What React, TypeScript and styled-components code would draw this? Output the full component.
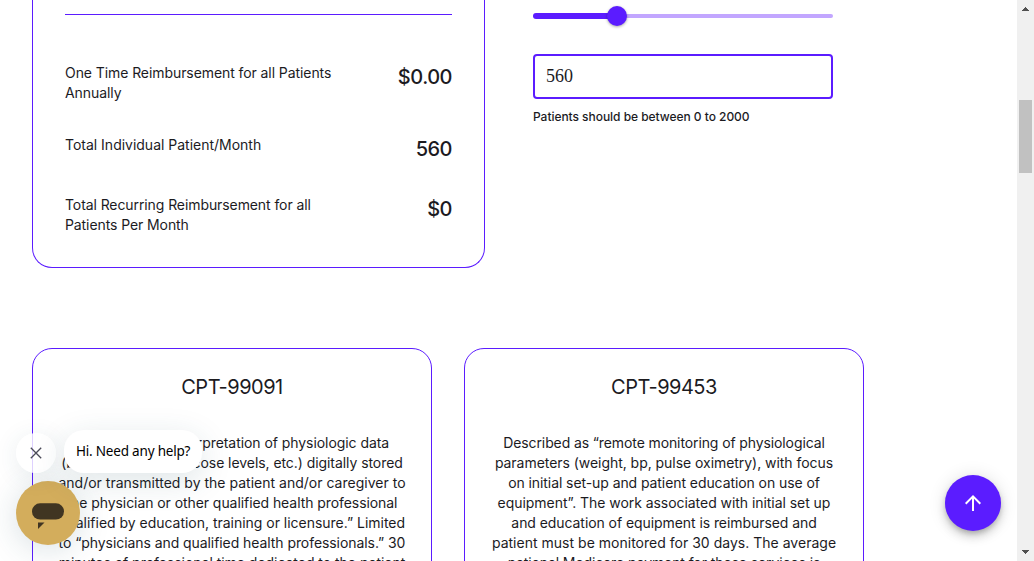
import React from "react";
import styled, { createGlobalStyle } from "styled-components";

const violet = "#5b1cff";

const GlobalStyle = createGlobalStyle`
  * { box-sizing: border-box; }
  body { margin: 0; background: #fff; overflow: hidden; }
`;

const Window = styled.div`
  position: relative;
  display: flex;
  width: 1034px;
  height: 561px;
  overflow: hidden;
  background: #fff;
  color: #1c1b1f;
  font-family: Inter, "Liberation Sans", sans-serif;
  font-size: 14px;
  line-height: 20px;
`;

const Page = styled.main`
  flex: 1;
  min-width: 0;
  height: 561px;
  overflow: hidden;
  padding: 0 32px;
`;

const Calculator = styled.section`
  display: flex;
  align-items: flex-start;
  gap: 48px;
  height: 268px;
`;

const Summary = styled.div`
  width: 453px;
  height: 268px;
  padding: 14px 32px 32px;
  border: 1px solid ${violet};
  border-top: 0;
  border-radius: 0 0 20px 20px;
`;

const Divider = styled.hr`
  height: 1px;
  margin: 0 0 48px;
  border: 0;
  background: ${violet};
`;

const Totals = styled.div`
  display: flex;
  flex-direction: column;
  gap: 32px;
`;

const TotalRow = styled.div`
  display: flex;
  justify-content: space-between;
  align-items: flex-start;
`;

const TotalLabel = styled.div<{ $tracking: number }>`
  width: 275px;
  letter-spacing: ${(p) => p.$tracking}px;
`;

const Amount = styled.div`
  height: 28px;
  font-size: 20px;
  font-weight: 500;
  line-height: 28px;
  letter-spacing: -0.5px;
`;

const Controls = styled.div`
  display: flex;
  flex-direction: column;
  width: 300px;
  padding-top: 6px;
`;

const Slider = styled.div`
  display: flex;
  align-items: center;
  height: 20px;
  margin-bottom: 28px;
`;

const Filled = styled.div`
  width: 84px;
  height: 6px;
  border-radius: 3px 0 0 3px;
  background: ${violet};
`;

const Thumb = styled.div`
  width: 20px;
  height: 20px;
  margin: 0 -10px;
  border-radius: 50%;
  background: ${violet};
  box-shadow: 0 1px 3px rgba(0, 0, 0, 0.35);
  z-index: 1;
`;

const Remaining = styled.div`
  flex: 1;
  height: 4px;
  border-radius: 0 2px 2px 0;
  background: #c2a6ff;
`;

const PatientInput = styled.input`
  width: 300px;
  height: 45px;
  padding: 0 12px 0 11px;
  border: 2px solid ${violet};
  border-radius: 4px;
  outline: 0;
  background: #fff;
  color: #1c1b1f;
  font: 18px "Liberation Serif", serif;
`;

const Hint = styled.div`
  margin-top: 10px;
  font-size: 12px;
  font-weight: 500;
  line-height: 16px;
  letter-spacing: -0.04px;
  white-space: nowrap;
`;

const Codes = styled.section`
  display: flex;
  gap: 32px;
  margin-top: 80px;
`;

const CodeCard = styled.article`
  width: 400px;
  height: 320px;
  padding: 24px 0;
  border: 1px solid ${violet};
  border-radius: 20px;
  text-align: center;
`;

const CodeTitle = styled.h2`
  height: 28px;
  margin: 0 0 32px;
  font-size: 20px;
  font-weight: 400;
  line-height: 28px;
  letter-spacing: -0.5px;
`;

const CodeLine = styled.div<{ $tracking: number }>`
  letter-spacing: ${(p) => p.$tracking}px;
  white-space: nowrap;
`;

const ScrollTrack = styled.div`
  display: flex;
  flex-direction: column;
  align-items: center;
  width: 17px;
  height: 561px;
  background: #f0f0f0;
`;

const ScrollThumb = styled.div`
  width: 13px;
  height: 73px;
  margin: 83px 0 auto;
  background: #c1c1c1;
`;

const Arrow = styled.svg`
  display: block;
  width: 17px;
  height: 17px;
`;

const TopButton = styled.button`
  position: absolute;
  right: 33px;
  bottom: 30px;
  display: grid;
  place-items: center;
  width: 56px;
  height: 56px;
  padding: 0;
  border: 0;
  border-radius: 50%;
  background: ${violet};
  box-shadow: 0 3px 5px -1px rgba(0, 0, 0, 0.2), 0 6px 10px rgba(0, 0, 0, 0.14), 0 1px 18px rgba(0, 0, 0, 0.12);
`;

const Chat = styled.aside`
  position: absolute;
  left: 16px;
  bottom: 16px;
`;

const Greeting = styled.div`
  display: flex;
  align-items: flex-end;
  gap: 8px;
  margin-bottom: 8px;
`;

const Close = styled.button`
  display: grid;
  place-items: center;
  width: 40px;
  height: 40px;
  padding: 0;
  border: 0;
  border-radius: 50%;
  background: rgba(255, 255, 255, 0.8);
  box-shadow: 0 4px 24px rgba(36, 80, 95, 0.1);
`;

const Bubble = styled.div`
  width: 138px;
  height: 43px;
  padding: 0 12px;
  border-radius: 20px;
  background: #fff;
  box-shadow: 0 8px 32px rgba(36, 80, 95, 0.15);
  color: #000;
  font: 13.5px/42px "Noto Sans", sans-serif;
  letter-spacing: -0.2px;
  white-space: nowrap;
`;

const Launcher = styled.button`
  display: block;
  width: 64px;
  height: 64px;
  padding: 0;
  border: 0;
  border-radius: 50%;
  background: #d3ad5c;
  box-shadow: 0 4px 32px rgba(36, 80, 95, 0.18);
`;

const totals = [
  { label: "One Time Reimbursement for all Patients Annually", value: "$0.00", tracking: -0.08 },
  { label: "Total Individual Patient/Month", value: "560", tracking: -0.01 },
  { label: "Total Recurring Reimbursement for all Patients Per Month", value: "$0", tracking: -0.09 },
];

const codes: { title: string; lines: [string, number][] }[] = [
  {
    title: "CPT-99091",
    lines: [
      ["Collection and interpretation of physiologic data", -0.06],
      ["(blood pressure, glucose levels, etc.) digitally stored", -0.065],
      ["and/or transmitted by the patient and/or caregiver to", 0.01],
      ["the physician or other qualified health professional", -0.07],
      ["qualified by education, training or licensure.” Limited", -0.02],
      ["to “physicians and qualified health professionals.” 30", -0.07],
      ["minutes of professional time dedicated to the patient", -0.03],
    ],
  },
  {
    title: "CPT-99453",
    lines: [
      ["Described as “remote monitoring of physiological", -0.11],
      ["parameters (weight, bp, pulse oximetry), with focus", -0.045],
      ["on initial set-up and patient education on use of", -0.08],
      ["equipment”. The work associated with initial set up", -0.05],
      ["and education of equipment is reimbursed and", -0.07],
      ["patient must be monitored for 30 days. The average", 0.015],
      ["national Medicare payment for these services is", -0.09],
    ],
  },
];

export default function App() {
  return (
    <>
      <GlobalStyle />
      <Window>
        <Page>
          <Calculator>
            <Summary>
              <Divider />
              <Totals>
                {totals.map((t) => (
                  <TotalRow key={t.label}>
                    <TotalLabel $tracking={t.tracking}>{t.label}</TotalLabel>
                    <Amount>{t.value}</Amount>
                  </TotalRow>
                ))}
              </Totals>
            </Summary>
            <Controls>
              <Slider>
                <Filled />
                <Thumb />
                <Remaining />
              </Slider>
              <PatientInput defaultValue="560" aria-label="Patients" />
              <Hint>Patients should be between 0 to 2000</Hint>
            </Controls>
          </Calculator>
          <Codes>
            {codes.map((c) => (
              <CodeCard key={c.title}>
                <CodeTitle>{c.title}</CodeTitle>
                {c.lines.map(([line, tracking]) => (
                  <CodeLine key={line} $tracking={tracking}>
                    {line}
                  </CodeLine>
                ))}
              </CodeCard>
            ))}
          </Codes>
        </Page>
        <ScrollTrack>
          <Arrow viewBox="0 0 17 17" shapeRendering="crispEdges">
            <path d="M5 11h7L8.5 7z" fill="#505050" />
          </Arrow>
          <ScrollThumb />
          <Arrow viewBox="0 0 17 17" shapeRendering="crispEdges">
            <path d="M5 6h7L8.5 10z" fill="#505050" />
          </Arrow>
        </ScrollTrack>
        <Chat>
          <Greeting>
            <Close aria-label="Close">
              <svg width="12" height="12" viewBox="0 0 12 12">
                <path d="M.8.8l10.4 10.4M11.2.8L.8 11.2" stroke="#4a4a59" strokeWidth="1.3" />
              </svg>
            </Close>
            <Bubble>Hi. Need any help?</Bubble>
          </Greeting>
          <Launcher aria-label="Open chat">
            <svg width="64" height="64" viewBox="0 0 64 64">
              <rect x="16" y="22.3" width="32" height="16.2" rx="8.1" fill="#403522" />
              <path d="M22 41.5h6.5L22 48z" fill="#403522" />
            </svg>
          </Launcher>
        </Chat>
        <TopButton aria-label="Back to top">
          <svg width="24" height="24" viewBox="0 0 24 24">
            <path d="M4 12l1.41 1.41L11 7.83V20h2V7.83l5.58 5.59L20 12l-8-8-8 8z" fill="#fff" />
          </svg>
        </TopButton>
      </Window>
    </>
  );
}
